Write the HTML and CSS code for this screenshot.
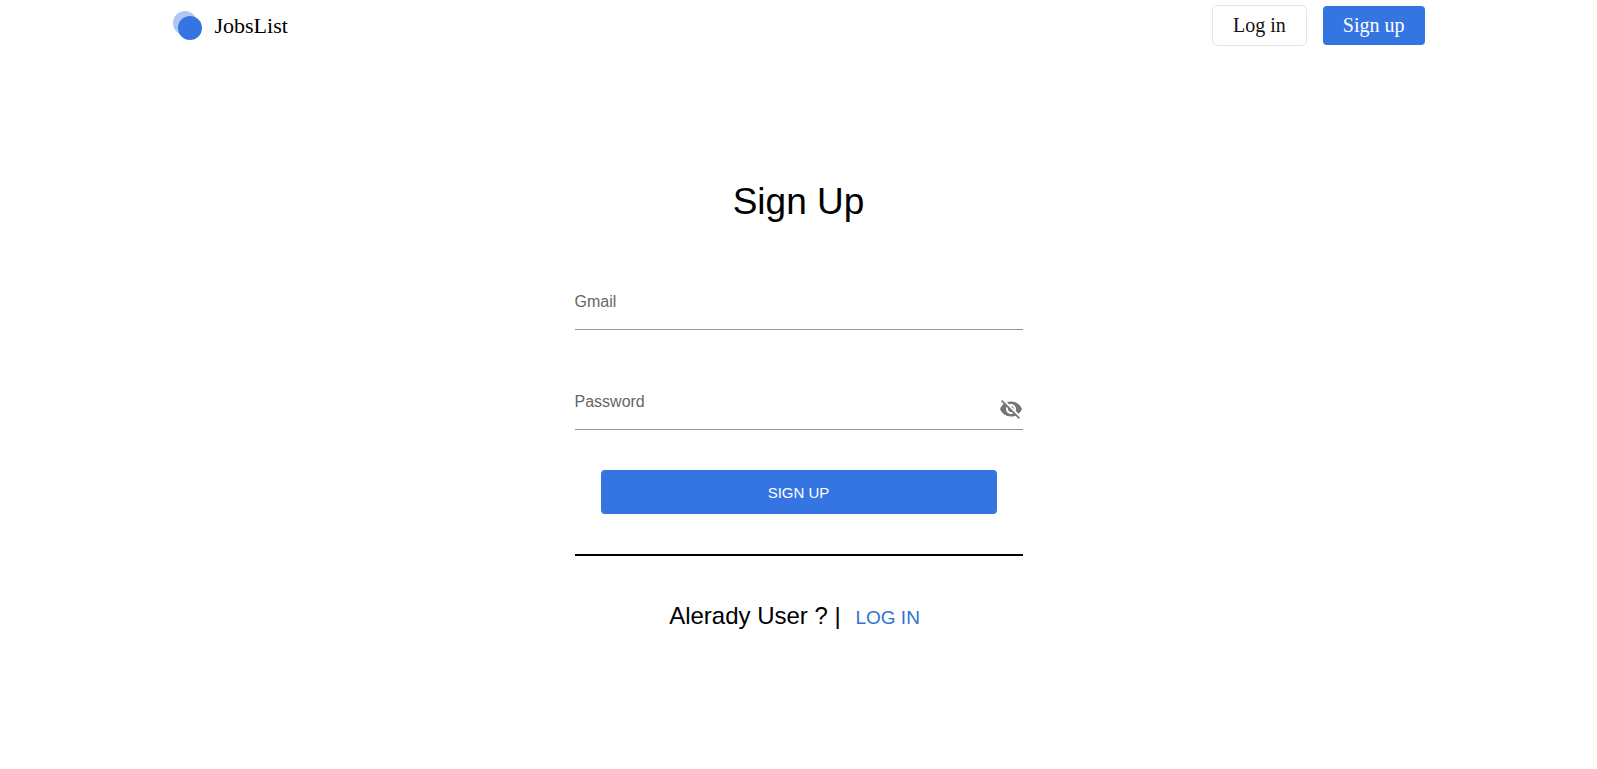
FILE: index.html
```html
<!DOCTYPE html>
<html lang="en">
<head>
<meta charset="utf-8">
<meta name="viewport" content="width=device-width, initial-scale=1">
<title>JobsList</title>
<link rel="stylesheet" href="styles.css">
</head>
<body>
<header class="header">
  <a class="brand" href="#">
    <svg class="brand-logo" viewBox="0 0 30 30" aria-hidden="true">
      <circle cx="12" cy="12" r="12" fill="#aec8f3"/>
      <circle cx="17" cy="17" r="12" fill="#3575e2"/>
    </svg>
    <span>JobsList</span>
  </a>
  <nav class="nav">
    <a class="nav-link nav-link-outlined" href="#">Log in</a>
    <a class="nav-link nav-link-filled" href="#">Sign up</a>
  </nav>
</header>
<main class="signup">
  <h1 class="title">Sign Up</h1>
  <form class="form">
    <div class="field">
      <label class="label" for="email">Gmail</label>
      <input class="input" id="email" type="email">
    </div>
    <div class="field">
      <label class="label" for="password">Password</label>
      <input class="input" id="password" type="password">
      <button class="toggle" type="button" aria-label="Show password">
        <svg class="toggle-icon" viewBox="0 0 24 24" aria-hidden="true"><path d="M12 7c2.76 0 5 2.24 5 5 0 .65-.13 1.26-.36 1.83l2.92 2.92c1.51-1.26 2.7-2.89 3.43-4.75-1.73-4.39-6-7.5-11-7.5-1.4 0-2.74.25-3.98.7l2.16 2.16C10.74 7.13 11.35 7 12 7zM2 4.27l2.28 2.28.46.46C3.08 8.3 1.78 10.02 1 12c1.73 4.39 6 7.5 11 7.5 1.55 0 3.03-.3 4.38-.84l.42.42L19.73 22 21 20.73 3.27 3 2 4.27zM7.53 9.8l1.55 1.55c-.05.21-.08.43-.08.65 0 1.66 1.34 3 3 3 .22 0 .44-.03.65-.08l1.55 1.55c-.67.33-1.41.53-2.2.53-2.76 0-5-2.24-5-5 0-.79.2-1.53.53-2.2zm4.31-.78l3.15 3.15.02-.16c0-1.66-1.34-3-3-3l-.17.01z"/></svg>
      </button>
    </div>
    <button class="submit" type="submit">SIGN UP</button>
  </form>
  <hr class="divider">
  <p class="switch">Alerady User ? | <a class="switch-link" href="#">LOG IN</a></p>
</main>
</body>
</html>
```
FILE: styles.css
```css
* {
  box-sizing: border-box;
}

body {
  margin: 0;
  background: #fff;
  color: #000;
  font-family: "Liberation Sans", Arial, sans-serif;
}

.header {
  display: flex;
  align-items: center;
  justify-content: space-between;
  max-width: 1300px;
  margin: 0 auto;
  padding: 5px 24px;
  font-family: "Liberation Serif", "Times New Roman", serif;
}

.brand {
  display: flex;
  align-items: center;
  gap: 12px;
  color: #000;
  font-size: 22px;
  line-height: 24px;
  text-decoration: none;
}

.brand-logo {
  width: 30px;
  height: 30px;
}

.nav {
  display: flex;
  align-items: center;
  gap: 16px;
}

.nav-link {
  padding: 8px 20px;
  border-radius: 4px;
  font-size: 20px;
  line-height: 23px;
  text-decoration: none;
}

.nav-link-outlined {
  border: 1px solid #e5e5e5;
  border-radius: 5px;
  color: #111;
}

.nav-link-filled {
  background: #3575e2;
  color: #fff;
}

.signup {
  display: flex;
  flex-direction: column;
  max-width: 448px;
  margin: 0 auto;
  padding-top: 127px;
}

.title {
  margin: 0;
  font-size: 37px;
  font-weight: 400;
  line-height: 48px;
  text-align: center;
}

.form {
  display: flex;
  flex-direction: column;
  gap: 40px;
  padding-top: 44px;
}

.field {
  display: grid;
  grid-template-columns: 1fr auto;
  height: 60px;
  border-bottom: 1px solid #949494;
}

.label,
.input {
  grid-row: 1;
  grid-column: 1;
}

.label {
  padding-top: 20px;
  color: #666;
  font-size: 16px;
  line-height: 24px;
  pointer-events: none;
}

.input {
  min-width: 0;
  padding: 20px 0 0;
  border: 0;
  outline: 0;
  background: transparent;
  font: inherit;
}

.toggle {
  align-self: end;
  padding: 0 0 8px;
  border: 0;
  background: transparent;
  cursor: pointer;
}

.toggle-icon {
  display: block;
  width: 24px;
  height: 24px;
  fill: #757575;
}

.submit {
  height: 44px;
  margin: 0 26px;
  border: 0;
  border-radius: 4px;
  background: #3575e2;
  color: #fff;
  font-family: inherit;
  font-size: 15px;
  cursor: pointer;
}

.divider {
  width: 100%;
  margin: 40px 0;
  border: 0;
  border-top: 2px solid #000;
}

.switch {
  margin: 0;
  font-size: 24px;
  line-height: 40px;
  text-align: center;
}

.switch-link {
  padding: 8px;
  color: #2f74d0;
  font-size: 19px;
  text-decoration: none;
}
```
